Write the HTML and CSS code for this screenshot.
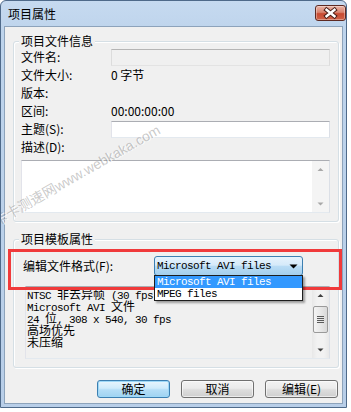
FILE: index.html
```html
<!DOCTYPE html>
<html lang="zh-CN">
<head>
<meta charset="utf-8">
<title>项目属性</title>
<link rel="stylesheet" href="styles.css">
</head>
<body>
<div class="window">
  <div class="titlebar">
    <span class="title">项目属性</span>
    <div class="close" aria-label="关闭">
      <svg width="29" height="14" viewBox="0 0 29 14">
        <path d="M10.5 3.8 L18.5 10.2 M18.5 3.8 L10.5 10.2" stroke="#4a1f18" stroke-width="4.4" stroke-linecap="square" fill="none"/>
        <path d="M10.5 3.8 L18.5 10.2 M18.5 3.8 L10.5 10.2" stroke="#ffffff" stroke-width="2.4" stroke-linecap="square" fill="none"/>
      </svg>
    </div>
  </div>
  <div class="client">
    <section class="group g1">
      <div class="legend">项目文件信息</div>
      <div class="row"><span class="lbl">文件名:</span><div class="edit disabled"></div></div>
      <div class="row"><span class="lbl">文件大小:</span><span class="val">0 字节</span></div>
      <div class="row"><span class="lbl">版本:</span></div>
      <div class="row"><span class="lbl">区间:</span><span class="val">00:00:00:00</span></div>
      <div class="row"><span class="lbl">主题(S):</span><div class="edit"></div></div>
      <div class="row"><span class="lbl">描述(D):</span></div>
      <div class="memo">
        <div class="memo-body"></div>
        <div class="vscroll off">
          <div class="sb-btn"><svg width="17" height="17" viewBox="0 0 17 17"><path d="M5.5 10 L8.5 7 L11.5 10 Z" class="arr"/></svg></div>
          <div class="sb-track"></div>
          <div class="sb-btn"><svg width="17" height="17" viewBox="0 0 17 17"><path d="M5.5 7.5 L8.5 10.5 L11.5 7.5 Z" class="arr"/></svg></div>
        </div>
      </div>
    </section>
    <section class="group g2">
      <div class="legend">项目模板属性</div>
      <div class="combo-row">
        <span class="lbl2">编辑文件格式(F):</span>
        <div class="combo">
          <span class="mono combo-text">Microsoft AVI files</span>
          <svg class="combo-arrow" width="9" height="5" viewBox="0 0 9 5"><path d="M0.5 0.5 L8.5 0.5 L4.5 4.5 Z" fill="#000"/></svg>
          <ul class="dropdown mono">
            <li class="sel">Microsoft AVI files</li>
            <li>MPEG files</li>
          </ul>
        </div>
      </div>
      <div class="info">
        <div class="info-text mono">
          <div class="line">NTSC <span class="c">非去异帧</span> (30 fps)</div>
          <div class="line">Microsoft AVI <span class="c">文件</span></div>
          <div class="line">24 <span class="c">位</span>, 308 x 540, 30 fps</div>
          <div class="line"><span class="c">高场优先</span></div>
          <div class="line"><span class="c">未压缩</span></div>
        </div>
        <div class="vscroll">
          <div class="sb-btn"><svg width="17" height="17" viewBox="0 0 17 17"><path d="M5.5 10 L8.5 7 L11.5 10 Z" class="arr"/></svg></div>
          <div class="sb-track">
            <div class="thumb">
              <svg width="7" height="7" viewBox="0 0 7 7"><path d="M0 0.5 H7 M0 2.5 H7 M0 4.5 H7 M0 6.5 H7" stroke="#5a5a5a" stroke-width="1"/></svg>
            </div>
          </div>
          <div class="sb-btn"><svg width="17" height="17" viewBox="0 0 17 17"><path d="M5.5 7.5 L8.5 10.5 L11.5 7.5 Z" class="arr"/></svg></div>
        </div>
      </div>
    </section>
    <div class="buttons">
      <button class="btn default">确定</button>
      <button class="btn">取消</button>
      <button class="btn">编辑(E)</button>
    </div>
  </div>
  <div class="highlight"></div>
  <div class="watermark">卡卡测速网www.webkaka.com</div>
</div>
</body>
</html>
```

FILE: styles.css
```css
* { box-sizing: border-box; }
html, body { margin: 0; padding: 0; }
body {
  background: #ffffff;
  font-family: "Noto Sans CJK SC", "Liberation Sans", sans-serif;
  font-size: 12px;
  line-height: 12px;
  color: #000;
}

.window {
  position: relative;
  width: 347px;
  height: 408px;
  border: 1px solid #4f6a8a;
  border-radius: 6px 6px 0 0;
  padding: 0 3px 3px;
  background: linear-gradient(#c6daf0, #bed4ec 30px, #b8cee8);
  display: flex;
  flex-direction: column;
  overflow: hidden;
}

.titlebar {
  flex: none;
  height: 25px;
  display: flex;
  justify-content: space-between;
  align-items: flex-start;
}
.title {
  padding: 7px 0 0 4px;
  font-size: 12px;
  line-height: 12px;
}
.close {
  width: 31px;
  height: 16px;
  margin: 4px -3px 0 0;
  border: 1px solid #5e2a22;
  border-radius: 3px;
  background: linear-gradient(#eab4a6, #d9846f 45%, #c84a31 55%, #cf6248);
  box-shadow: inset 0 0 0 1px rgba(255, 255, 255, 0.35);
}
.close svg { display: block; }

.client {
  flex: 1;
  background: #f0f0f0;
  border: 1px solid #8da3bb;
  display: flex;
  flex-direction: column;
}

.group {
  border: 1px solid #d5dfe5;
  border-radius: 3px;
  margin: 0 3px 0 8px;
  padding: 0 8px 8px 7px;
  box-shadow: inset 1px 1px 0 #fff, 1px 1px 0 #fff;
}
.g1 { margin-top: 14px; }
.g2 { margin-top: 17px; }
.legend {
  margin: -7px 0 1px -2px;
  padding: 0 2px;
  width: max-content;
  height: 12px;
  line-height: 12px;
  background: #f0f0f0;
}

.row {
  display: flex;
  align-items: center;
  height: 18px;
}
.lbl { width: 90px; flex: none; }

.edit {
  width: 219px;
  height: 17px;
  border: 1px solid;
  border-color: #abadb3 #dbdfe6 #e3e9ef #e2e3ea;
  background: #fff;
}
.edit.disabled {
  background: #f0f0f0;
  border-color: #b5b5b5 #dcdcdc #e3e3e3 #dcdcdc;
}

.memo {
  margin-top: 4px;
  width: 309px;
  height: 53px;
  display: flex;
  border: 1px solid;
  border-color: #abadb3 #dbdfe6 #e3e9ef #e2e3ea;
  background: #fff;
}
.memo-body { flex: 1; }

.vscroll {
  width: 17px;
  flex: none;
  display: flex;
  flex-direction: column;
  background: linear-gradient(90deg, #e8e8e8, #f2f2f2 30%, #f2f2f2 70%, #e8e8e8);
}
.sb-btn { height: 17px; flex: none; }
.sb-btn svg { display: block; }
.sb-track { flex: 1; padding-top: 2px; }
.arr { fill: #404040; }
.vscroll.off .arr { fill: #a8a8a8; }
.vscroll.off { background: #f4f4f4; }

.thumb {
  margin: 0 1px;
  height: 27px;
  border: 1px solid #9a9a9a;
  border-radius: 2px;
  background: linear-gradient(90deg, #f4f4f4, #e8e8e8 50%, #d9d9d9);
  display: flex;
  align-items: center;
  justify-content: center;
}
.thumb svg { display: block; }

.combo-row {
  display: flex;
  align-items: center;
  height: 20px;
  margin-top: 11px;
}
.lbl2 { width: 133px; flex: none; padding-left: 2px; }

.mono {
  font-family: "Liberation Mono", "Noto Sans CJK SC", monospace;
  font-size: 11px;
  letter-spacing: -0.6px;
}
.c {
  font-family: "Noto Sans CJK SC", sans-serif;
  font-size: 12px;
  letter-spacing: 0;
}

.combo {
  position: relative;
  width: 149px;
  height: 20px;
  border: 1px solid #3c7fb1;
  border-radius: 3px;
  background: linear-gradient(#e6f2fc, #d5eafa 45%, #b9dcf5 52%, #a3cfee);
  display: flex;
  align-items: center;
  justify-content: space-between;
  padding: 0 4px 0 2px;
}
.combo-text { line-height: 12px; }
.combo-arrow { display: block; }

.dropdown {
  position: absolute;
  z-index: 3;
  left: -1px;
  top: 18px;
  width: 149px;
  margin: 0;
  padding: 0;
  list-style: none;
  background: #fff;
  border: 1px solid #1e1e1e;
  box-shadow: 2px 2px 2px rgba(0, 0, 0, 0.35);
}
.dropdown li {
  height: 12px;
  line-height: 12px;
  padding-left: 2px;
  white-space: pre;
}
.dropdown li.sel { background: #3399ff; color: #fff; }

.info {
  margin: 10px 0 0 4px;
  width: 305px;
  height: 73px;
  display: flex;
  border: 1px solid;
  border-color: #abadb3 #dbdfe6 #e3e9ef #e2e3ea;
  background: #f0f0f0;
}
.info-text {
  flex: 1;
  padding: 1px 0 0 1px;
  overflow: hidden;
}
.line {
  height: 12px;
  line-height: 12px;
  white-space: pre;
}

.buttons {
  display: flex;
  justify-content: flex-end;
  gap: 11px;
  margin-top: 12px;
  padding-right: 4px;
}
.btn {
  width: 73px;
  height: 18px;
  padding: 0;
  border: 1px solid #707070;
  border-radius: 3px;
  background: linear-gradient(#f3f3f3, #ebebeb 45%, #dddddd 55%, #cfcfcf);
  box-shadow: inset 0 0 0 1px rgba(255, 255, 255, 0.6);
  font-family: "Noto Sans CJK SC", "Liberation Sans", sans-serif;
  font-size: 12px;
  line-height: 14px;
  color: #000;
}
.btn.default {
  border-color: #3c7fb1;
  background: linear-gradient(#e8f5fd, #cfebfb 45%, #b4def7 55%, #9fd2f1);
  box-shadow: inset 0 0 0 1px #9ed8f7;
}

.highlight {
  position: absolute;
  z-index: 2;
  left: 7px;
  top: 248px;
  width: 334px;
  height: 41px;
  border: 3px solid #f03a3b;
}

.watermark {
  position: absolute;
  z-index: 4;
  left: -3px;
  top: 213px;
  font-family: "Liberation Sans", "Noto Sans CJK SC", sans-serif;
  font-size: 14px;
  line-height: 14px;
  color: rgba(120, 120, 120, 0.4);
  text-shadow: 1px 1px 0 rgba(255, 255, 255, 0.8);
  white-space: nowrap;
  transform: rotate(-29.6deg);
  transform-origin: 0 100%;
  pointer-events: none;
}
```
